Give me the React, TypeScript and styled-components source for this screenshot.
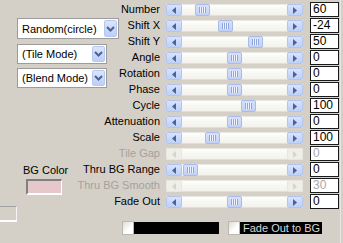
import React from "react";
import styled, { createGlobalStyle } from "styled-components";

const Global = createGlobalStyle`
  html, body { margin: 0; padding: 0; background: #d4d0c8; }
  body { font-family: "Liberation Sans", Arial, sans-serif; font-size: 11px; color: #000; }
`;

const Panel = styled.div`
  position: relative;
  width: 343px;
  height: 243px;
  box-sizing: border-box;
  padding-top: 2px;
  background: #d4d0c8;
  display: grid;
  grid-template-columns: 160px 6px 137px 7px 29px 1fr;
  grid-template-rows: repeat(13, 16px) 1fr;
  overflow: hidden;
`;

const LeftPanel = styled.div`
  grid-column: 1;
  grid-row: 1 / -1;
  display: flex;
  flex-direction: column;
  align-items: flex-start;
  padding: 16px 0 0 17px;
`;

const Combo = styled.div<{ $w: number; $h: number; $mt: number }>`
  width: ${(p) => p.$w}px;
  height: ${(p) => p.$h}px;
  margin-top: ${(p) => p.$mt}px;
  box-sizing: border-box;
  border: 1px solid #9c9c9c;
  background: #fff;
  display: flex;
  align-items: center;
  padding: 1px;
`;

const ComboText = styled.span`
  flex: 1;
  padding-left: 3px;
  font-size: 11px;
  white-space: nowrap;
`;

const ComboButton = styled.span`
  width: 13px;
  align-self: stretch;
  border-radius: 2px;
  box-sizing: border-box;
  border: 1px solid #b6c8f0;
  background: linear-gradient(#dbe5fc, #bccff8);
  display: flex;
  align-items: center;
  justify-content: center;
`;

const BgLabel = styled.div`
  margin-top: 76px;
  margin-left: 6px;
  font-size: 11px;
`;

const Swatch = styled.div`
  margin-top: 3px;
  margin-left: 9px;
  width: 36px;
  height: 16px;
  box-sizing: border-box;
  border-top: 2px solid #808080;
  border-left: 2px solid #808080;
  border-right: 1px solid #ffffff;
  border-bottom: 2px solid #ffffff;
  background: #e6c7cc;
`;

const CutBox = styled.div`
  margin-top: 11px;
  margin-left: -17px;
  width: 17px;
  height: 16px;
  box-sizing: border-box;
  border-top: 1px solid #a0a0a0;
  border-right: 1px solid #f4f4f4;
  border-bottom: 2px solid #ffffff;
`;

const Label = styled.div<{ $row: number; $disabled?: boolean }>`
  grid-column: 1;
  grid-row: ${(p) => p.$row};
  justify-self: end;
  align-self: center;
  margin-top: -2px;
  font-size: 11px;
  white-space: nowrap;
  color: ${(p) => (p.$disabled ? "#a4a29b" : "#000")};
`;

const Slider = styled.div<{ $row: number; $disabled?: boolean }>`
  grid-column: 3;
  grid-row: ${(p) => p.$row};
  align-self: center;
  position: relative;
  height: 12px;
  display: flex;
  background: linear-gradient(#fdfdfb, #f3f2ec);
  border-top: 1px solid #ebe9e1;
  border-bottom: 1px solid #e2e0d6;
  box-sizing: border-box;
`;

const Track = styled.div`
  flex: 1;
`;

const ArrowBtn = styled.div<{ $disabled?: boolean }>`
  width: 16px;
  height: 12px;
  margin-top: -1px;
  box-sizing: border-box;
  border-radius: 2px;
  border: 1px solid ${(p) => (p.$disabled ? "#e8e7df" : "#b3c5ee")};
  background: ${(p) =>
    p.$disabled ? "#efeee7" : "linear-gradient(#d8e3fd, #bdd0f9)"};
  display: flex;
  align-items: center;
  justify-content: center;
`;

const Thumb = styled.div`
  position: absolute;
  top: -1px;
  width: 15px;
  height: 12px;
  box-sizing: border-box;
  border-radius: 2px;
  border: 1px solid #a9bce6;
  background: linear-gradient(#d6e1fc, #c1d2f9);
  display: flex;
  align-items: center;
  justify-content: center;
`;

const Grip = styled.div`
  width: 7px;
  height: 6px;
  background: repeating-linear-gradient(
    90deg,
    #8fa6d8 0px,
    #8fa6d8 1px,
    #eef3ff 1px,
    #eef3ff 2px
  );
`;

const ValueBox = styled.div<{ $row: number; $disabled?: boolean }>`
  grid-column: 5;
  grid-row: ${(p) => p.$row};
  height: 15px;
  box-sizing: border-box;
  border: 1px solid #1a1a1a;
  background: #fff;
  padding-left: 2px;
  font-size: 12px;
  line-height: 13px;
  color: ${(p) => (p.$disabled ? "#a8a8a8" : "#000")};
`;

const BottomBar = styled.div`
  grid-column: 1 / -1;
  grid-row: 14;
  display: flex;
  align-items: center;
  padding: 11px 0 0 122px;
  align-self: start;
`;

const CheckItem = styled.div<{ $ml: number }>`
  display: flex;
  align-items: center;
  margin-left: ${(p) => p.$ml}px;
`;

const CheckBoxSquare = styled.div`
  width: 12px;
  height: 14px;
  box-sizing: border-box;
  border: 1px solid #b9b9b0;
  background: linear-gradient(135deg, #dcdcd6, #ffffff 60%);
`;

const CheckLabel = styled.div<{ $w: number }>`
  width: ${(p) => p.$w}px;
  height: 12px;
  background: #000;
  color: #d8d8d8;
  font-size: 11px;
  line-height: 12px;
  padding-left: 3px;
  box-sizing: border-box;
  white-space: nowrap;
`;

const EdgeLine = styled.div`
  position: absolute;
  top: 0;
  bottom: 0;
  left: 340px;
  width: 1px;
  background: #e8e6e0;
`;

const LeftArrow = ({ disabled }: { disabled?: boolean }) => (
  <svg width="6" height="7" viewBox="0 0 6 7">
    <polygon points="5,0 5,7 1,3.5" fill={disabled ? "#d6d5cd" : "#4d6190"} />
  </svg>
);

const RightArrow = ({ disabled }: { disabled?: boolean }) => (
  <svg width="6" height="7" viewBox="0 0 6 7">
    <polygon points="1,0 1,7 5,3.5" fill={disabled ? "#d6d5cd" : "#4d6190"} />
  </svg>
);

const Chevron = () => (
  <svg width="9" height="6" viewBox="0 0 9 6">
    <polyline points="1,1 4.5,4.5 8,1" fill="none" stroke="#4d6190" strokeWidth="2" />
  </svg>
);

type Row = { label: string; value: string; thumb: number | null; disabled?: boolean };

const rows: Row[] = [
  { label: "Number", value: "60", thumb: 29 },
  { label: "Shift X", value: "-24", thumb: 52 },
  { label: "Shift Y", value: "50", thumb: 82 },
  { label: "Angle", value: "0", thumb: 61 },
  { label: "Rotation", value: "0", thumb: 61 },
  { label: "Phase", value: "0", thumb: 61 },
  { label: "Cycle", value: "100", thumb: 75 },
  { label: "Attenuation", value: "0", thumb: 61 },
  { label: "Scale", value: "100", thumb: 39 },
  { label: "Tile Gap", value: "0", thumb: null, disabled: true },
  { label: "Thru BG Range", value: "0", thumb: 17 },
  { label: "Thru BG Smooth", value: "30", thumb: null, disabled: true },
  { label: "Fade Out", value: "0", thumb: 61 },
];

const combos = [
  { text: "Random(circle)", w: 102, h: 21, mt: 0 },
  { text: "(Tile Mode)", w: 90, h: 20, mt: 5 },
  { text: "(Blend Mode)", w: 90, h: 20, mt: 4 },
];

export default function App() {
  return (
    <>
      <Global />
      <Panel>
        <LeftPanel>
          {combos.map((c) => (
            <Combo key={c.text} $w={c.w} $h={c.h} $mt={c.mt}>
              <ComboText>{c.text}</ComboText>
              <ComboButton>
                <Chevron />
              </ComboButton>
            </Combo>
          ))}
          <BgLabel>BG Color</BgLabel>
          <Swatch />
          <CutBox />
        </LeftPanel>
        {rows.map((r, i) => (
          <React.Fragment key={r.label}>
            <Label $row={i + 1} $disabled={r.disabled}>
              {r.label}
            </Label>
            <Slider $row={i + 1} $disabled={r.disabled}>
              <ArrowBtn $disabled={r.disabled}>
                <LeftArrow disabled={r.disabled} />
              </ArrowBtn>
              <Track />
              <ArrowBtn $disabled={r.disabled}>
                <RightArrow disabled={r.disabled} />
              </ArrowBtn>
              {r.thumb !== null && (
                <Thumb style={{ left: r.thumb }}>
                  <Grip />
                </Thumb>
              )}
            </Slider>
            <ValueBox $row={i + 1} $disabled={r.disabled}>
              {r.value}
            </ValueBox>
          </React.Fragment>
        ))}
        <BottomBar>
          <CheckItem $ml={0}>
            <CheckBoxSquare />
            <CheckLabel $w={85} />
          </CheckItem>
          <CheckItem $ml={9}>
            <CheckBoxSquare />
            <CheckLabel $w={82}>Fade Out to BG</CheckLabel>
          </CheckItem>
        </BottomBar>
        <EdgeLine />
      </Panel>
    </>
  );
}
